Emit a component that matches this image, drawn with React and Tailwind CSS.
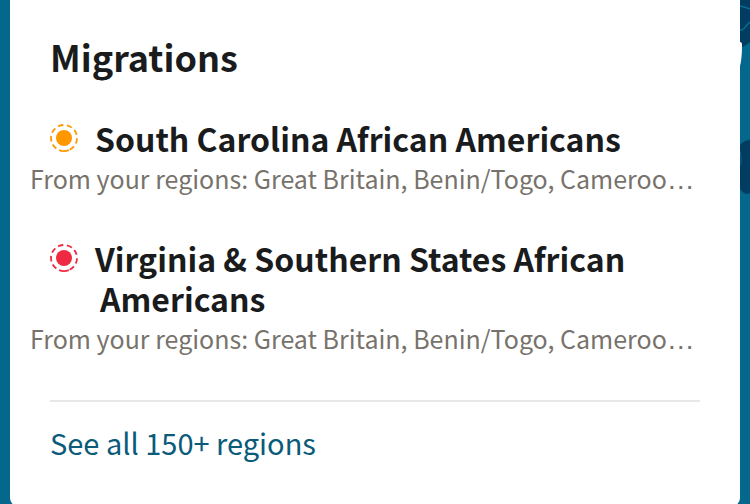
import React from "react";

const migrations = [
  {
    name: "South Carolina African Americans",
    color: "text-[#ff9800]",
    regions: "From your regions: Great Britain, Benin/Togo, Cameroo",
  },
  {
    name: "Virginia & Southern States African Americans",
    color: "text-[#ee2a42]",
    regions: "From your regions: Great Britain, Benin/Togo, Cameroo",
  },
];

const MigrationIcon = ({ className }) => (
  <svg
    viewBox="0 0 28 28"
    className={`h-7 w-7 shrink-0 ${className}`}
    aria-hidden="true"
  >
    <circle cx="14" cy="14" r="8" fill="currentColor" />
    {/* Long dash at the bottom, eight short ones round the rest */}
    <circle
      cx="14"
      cy="14"
      r="13"
      fill="none"
      stroke="currentColor"
      strokeWidth="1.8"
      pathLength="360"
      strokeDasharray="44 14 24 15 24 15 24 15 24 16 24 15 24 15 24 15 24 14"
      transform="rotate(68 14 14)"
    />
  </svg>
);

// Edge of the map that shows behind the card
const MapBackground = () => (
  <svg
    viewBox="0 0 10 504"
    className="absolute top-0 right-0 h-[504px] w-[10px]"
    aria-hidden="true"
  >
    <path d="M0 0H10V42L3 47L0 43Z" fill="#003d61" />
    <path d="M0 6Q5 7 10 9M0 30Q4 30 6 26L10 22" fill="none" stroke="#066f94" strokeWidth="1.5" />
    <path d="M0 145Q3 140 10 139V193Q5 196 0 189Z" fill="#003d61" />
    <path d="M0 144Q4 140 10 139M0 151L1 156V165" fill="none" stroke="#08668b" strokeWidth="1" />
    <path d="M0 42Q2 42 2 45Q2 59 0 66Z" fill="white" />
  </svg>
);

const App = () => {
  return (
    <div className="relative h-screen overflow-hidden bg-[#04678c] px-[10px] font-['Noto_Sans_CJK_SC','Noto_Sans',sans-serif] text-[#1a1b1c]">
      <MapBackground />
      <main className="rounded-b-lg bg-white px-10 pt-9 pb-11">
        <h1 className="text-[36px] leading-10 font-bold">Migrations</h1>

        <ul className="mt-[42px] space-y-10">
          {migrations.map((item) => (
            <li key={item.name}>
              <div className="flex items-start gap-[22px]">
                <MigrationIcon className={`mt-1.5 ${item.color}`} />
                <h2 className="-indent-[5px] text-[32px] leading-10 font-bold">
                  {item.name}
                </h2>
              </div>
              <p className="-mx-5 overflow-hidden text-[25px] leading-10 whitespace-nowrap text-[#77736c]">
                {item.regions}
                <span className="font-['Liberation_Sans',sans-serif] text-[28px] leading-none">…</span>
              </p>
            </li>
          ))}
        </ul>

        <div className="mt-[42px] border-t-2 border-[#e7e7e7] pt-5">
          <a
            href="#regions"
            className="inline-block text-[29px] leading-10 text-[#0a5a7a]"
          >
            See all 150+ regions
          </a>
        </div>
      </main>
    </div>
  );
};

export default App;
